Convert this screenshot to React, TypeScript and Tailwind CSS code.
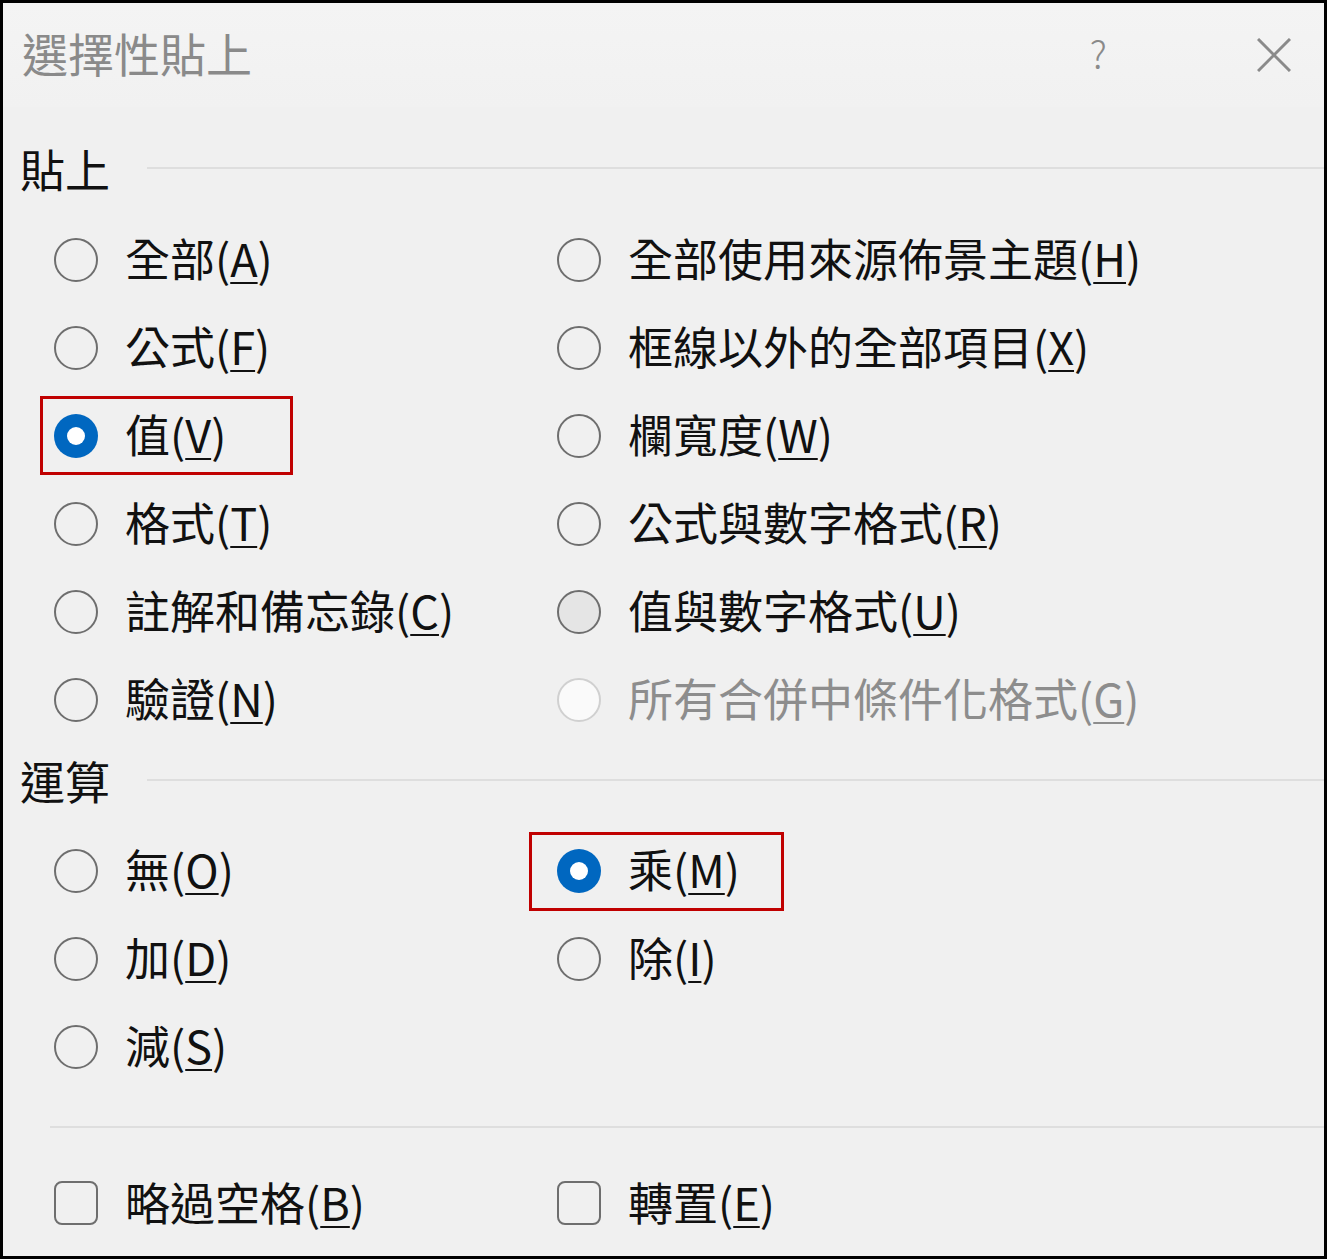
import React from 'react';

type Opt = {
  label: string;
  key: string;
  checked?: boolean;
  hover?: boolean;
  disabled?: boolean;
  boxed?: 'left' | 'right';
};

const pasteLeft: Opt[] = [
  { label: '全部', key: 'A' },
  { label: '公式', key: 'F' },
  { label: '值', key: 'V', checked: true, boxed: 'left' },
  { label: '格式', key: 'T' },
  { label: '註解和備忘錄', key: 'C' },
  { label: '驗證', key: 'N' },
];

const pasteRight: Opt[] = [
  { label: '全部使用來源佈景主題', key: 'H' },
  { label: '框線以外的全部項目', key: 'X' },
  { label: '欄寬度', key: 'W' },
  { label: '公式與數字格式', key: 'R' },
  { label: '值與數字格式', key: 'U', hover: true },
  { label: '所有合併中條件化格式', key: 'G', disabled: true },
];

const opLeft: Opt[] = [
  { label: '無', key: 'O' },
  { label: '加', key: 'D' },
  { label: '減', key: 'S' },
];

const opRight: Opt[] = [
  { label: '乘', key: 'M', checked: true, boxed: 'right' },
  { label: '除', key: 'I' },
];

function Radio({ opt }: { opt: Opt }) {
  let circle = 'border-2 border-[#6e6e6e] bg-[#f0f0f0]';
  if (opt.checked) circle = 'bg-[#0067c0]';
  else if (opt.hover) circle = 'border-2 border-[#6e6e6e] bg-[#e5e5e5]';
  else if (opt.disabled) circle = 'border-2 border-[#d0d0d0] bg-[#fafafa]';

  return (
    <div className="relative flex items-center h-[88px]">
      {opt.boxed === 'left' && (
        <div className="absolute left-[-14px] top-[4px] w-[253px] h-[79px] border-[3px] border-[#c00000]" />
      )}
      {opt.boxed === 'right' && (
        <div className="absolute left-[-28px] top-[5px] w-[255px] h-[79px] border-[3px] border-[#c00000]" />
      )}
      <div className={`w-[44px] h-[44px] rounded-full flex items-center justify-center shrink-0 ${circle}`}>
        {opt.checked && <div className="w-[18px] h-[18px] rounded-full bg-white" />}
      </div>
      <span
        className={`ml-[27px] mb-[6px] text-[45px] leading-none whitespace-nowrap ${
          opt.disabled ? 'text-[#8d8d8d]' : 'text-[#111]'
        }`}
      >
        {opt.label}(<u className="underline decoration-[2px] underline-offset-[5px]">{opt.key}</u>)
      </span>
    </div>
  );
}

function Checkbox({ label, k }: { label: string; k: string }) {
  return (
    <div className="flex items-center h-[88px]">
      <div className="w-[44px] h-[44px] rounded-[8px] border-2 border-[#6e6e6e] bg-[#f0f0f0] shrink-0" />
      <span className="ml-[27px] mb-[4px] text-[45px] leading-none whitespace-nowrap text-[#111]">
        {label}(<u className="underline decoration-[2px] underline-offset-[5px]">{k}</u>)
      </span>
    </div>
  );
}

function SectionHeader({ title }: { title: string }) {
  return (
    <div className="flex items-center pl-[17px]">
      <span className="text-[45px] leading-none text-[#111]">{title}</span>
      <div className="flex-1 ml-[37px] h-[2px] bg-[#dedede]" />
    </div>
  );
}

export default function App() {
  return (
    <div
      className="w-[1327px] h-[1259px] border-[3px] border-black bg-[#f0f0f0] flex flex-col overflow-hidden"
      style={{ fontFamily: '"Noto Sans CJK TC", "Noto Sans", sans-serif' }}
    >
      {/* Title bar */}
      <div className="h-[104px] shrink-0 flex items-center pl-[19px] pr-[33px] bg-gradient-to-b from-[#f4f4f4] to-[#f1f1f1]">
        <span className="text-[46px] leading-none text-[#8a8a8a] mb-[6px]">選擇性貼上</span>
        <span className="ml-auto text-[38px] leading-none text-[#8a8a8a] font-light mb-[4px]">?</span>
        <svg className="ml-[150px]" width="34" height="34" viewBox="0 0 34 34">
          <path d="M1 1 L33 33 M33 1 L1 33" stroke="#8a8a8a" strokeWidth="3" fill="none" />
        </svg>
      </div>

      {/* Paste */}
      <div className="h-[96px] mt-[13px] shrink-0 flex flex-col justify-center">
        <SectionHeader title="貼上" />
      </div>
      <div className="grid grid-cols-[503px_1fr] pl-[51px] shrink-0">
        <div className="flex flex-col">
          {pasteLeft.map((o) => (
            <Radio key={o.key} opt={o} />
          ))}
        </div>
        <div className="flex flex-col">
          {pasteRight.map((o) => (
            <Radio key={o.key} opt={o} />
          ))}
        </div>
      </div>

      {/* Operation */}
      <div className="h-[72px] mb-[11px] shrink-0 flex flex-col justify-center">
        <SectionHeader title="運算" />
      </div>
      <div className="grid grid-cols-[503px_1fr] pl-[51px] shrink-0">
        <div className="flex flex-col">
          {opLeft.map((o) => (
            <Radio key={o.key} opt={o} />
          ))}
        </div>
        <div className="flex flex-col">
          {opRight.map((o) => (
            <Radio key={o.key} opt={o} />
          ))}
        </div>
      </div>

      <div className="mt-[35px] ml-[47px] h-[2px] bg-[#dedede] shrink-0" />

      <div className="grid grid-cols-[503px_1fr] pl-[51px] mt-[31px] shrink-0">
        <Checkbox label="略過空格" k="B" />
        <Checkbox label="轉置" k="E" />
      </div>
    </div>
  );
}
